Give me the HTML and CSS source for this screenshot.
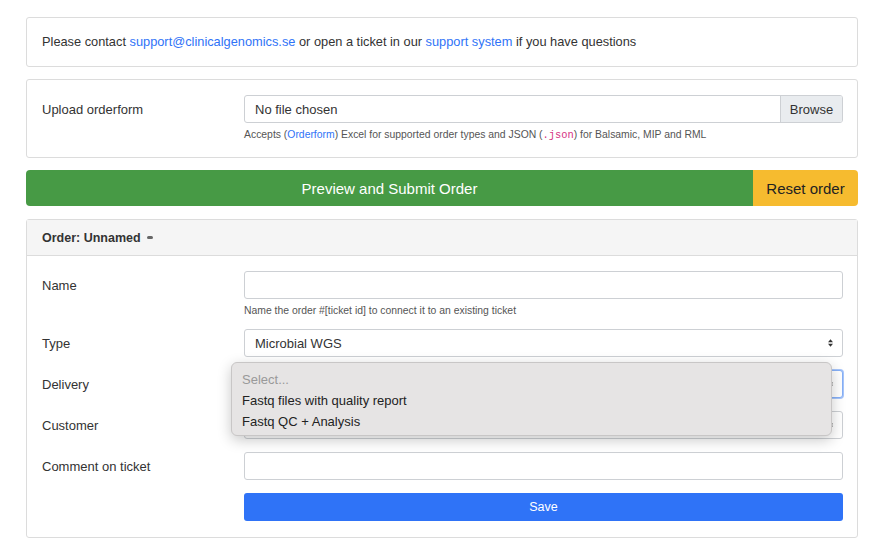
FILE: index.html
```html
<!DOCTYPE html>
<html>
<head>
<meta charset="utf-8">
<link rel="stylesheet" href="styles.css">
</head>
<body>
<div class="page">
  <div class="card card-info">
    <p class="info-text">Please contact <a href="#">support@clinicalgenomics.se</a> or open a ticket in our <a href="#">support system</a> if you have questions</p>
  </div>

  <div class="card card-upload">
    <div class="row">
      <div class="label">Upload orderform</div>
      <div class="field">
        <div class="file">
          <span class="file-name">No file chosen</span>
          <span class="file-btn">Browse</span>
        </div>
        <div class="help">Accepts (<a href="#">Orderform</a>) Excel for supported order types and JSON (<code>.json</code>) for Balsamic, MIP and RML</div>
      </div>
    </div>
  </div>

  <div class="actions">
    <button class="btn-submit">Preview and Submit Order</button>
    <button class="btn-reset">Reset order</button>
  </div>

  <div class="card card-order">
    <div class="card-head">Order: Unnamed <span class="edit-ico"></span></div>
    <div class="card-body">
      <div class="row row-help">
        <div class="label">Name</div>
        <div class="field">
          <div class="input"></div>
          <div class="help">Name the order #[ticket id] to connect it to an existing ticket</div>
        </div>
      </div>
      <div class="row">
        <div class="label">Type</div>
        <div class="field">
          <div class="input select">Microbial WGS<svg class="arrows" viewBox="0 0 8 12" width="7" height="10"><path d="M1 5 L4 1.5 L7 5 Z M1 7 L4 10.5 L7 7 Z" fill="#333"/></svg></div>
        </div>
      </div>
      <div class="row">
        <div class="label">Delivery</div>
        <div class="field field-pop">
          <div class="input select focused"><svg class="arrows" viewBox="0 0 8 12" width="7" height="10"><path d="M1 5 L4 1.5 L7 5 Z M1 7 L4 10.5 L7 7 Z" fill="#333"/></svg></div>
          <div class="dropdown">
            <div class="opt opt-ph">Select...</div>
            <div class="opt">Fastq files with quality report</div>
            <div class="opt">Fastq QC + Analysis</div>
          </div>
        </div>
      </div>
      <div class="row">
        <div class="label">Customer</div>
        <div class="field">
          <div class="input select"><svg class="arrows" viewBox="0 0 8 12" width="7" height="10"><path d="M1 5 L4 1.5 L7 5 Z M1 7 L4 10.5 L7 7 Z" fill="#333"/></svg></div>
        </div>
      </div>
      <div class="row">
        <div class="label">Comment on ticket</div>
        <div class="field">
          <div class="input"></div>
        </div>
      </div>
      <div class="row">
        <div class="label"></div>
        <div class="field">
          <button class="btn-save">Save</button>
        </div>
      </div>
    </div>
  </div>
</div>
</body>
</html>
```

FILE: styles.css
```css
* { box-sizing: border-box; }
html, body { margin: 0; padding: 0; background: #fff; }
body {
  font-family: "Liberation Sans", Arial, sans-serif;
  font-size: 13px;
  color: #333;
}
a { color: #2f73f7; text-decoration: none; }
.page {
  width: 832px;
  margin: 17px 0 0 26px;
  display: flex;
  flex-direction: column;
  gap: 12px;
}
.card {
  border: 1px solid #dcdcdc;
  border-radius: 3px;
  background: #fff;
}
.card-info {
  height: 50px;
  padding: 0 15px;
}
.info-text {
  margin: 0;
  line-height: 48px;
  font-size: 12.8px;
}
.card-upload {
  padding: 15px 15px 0 15px;
  height: 79px;
}
.row {
  display: grid;
  grid-template-columns: 202px 599px;
  align-items: start;
}
.label {
  height: 28px;
  display: flex;
  align-items: center;
}
.file {
  height: 28px;
  border: 1px solid #cdd0d4;
  border-radius: 3px;
  display: flex;
  align-items: stretch;
  overflow: hidden;
}
.file-name {
  flex: 1;
  display: flex;
  align-items: center;
  padding-left: 10px;
}
.file-btn {
  width: 62px;
  background: #e9ecef;
  border-left: 1px solid #cdd0d4;
  display: flex;
  align-items: center;
  justify-content: center;
}
.help {
  font-size: 10.4px;
  color: #555;
  margin-top: 5px;
  line-height: 14px;
}
.help code {
  font-family: "Liberation Mono", monospace;
  color: #d63384;
  font-size: 10.4px;
}
.actions {
  display: flex;
  height: 36px;
  margin-bottom: 1px;
}
.actions button {
  border: none;
  font-family: inherit;
  font-size: 15px;
  margin: 0;
}
.btn-submit {
  flex: 1;
  background: #479a45;
  color: #fff;
  border-radius: 4px 0 0 4px;
}
.btn-reset {
  width: 105px;
  background: #f6bb2f;
  color: #222;
  border-radius: 0 4px 4px 0;
}
.card-order { height: 319px; }
.card-head {
  height: 36px;
  background: #f5f5f5;
  border-bottom: 1px solid #dcdcdc;
  padding: 0 15px;
  display: flex;
  align-items: center;
  font-weight: bold;
  font-size: 12.5px;
  color: #333;
}
.edit-ico {
  display: inline-block;
  width: 6px;
  height: 3px;
  border-radius: 2px;
  background: #666;
  margin-left: 6px;
}
.card-body {
  padding: 15px 15px 0 15px;
  display: flex;
  flex-direction: column;
  gap: 13px;
}
.row-help { margin-bottom: -2px; }
.input {
  height: 28px;
  border: 1px solid #cdd0d4;
  border-radius: 3px;
  background: #fff;
  position: relative;
  display: flex;
  align-items: center;
  padding-left: 10px;
}
.select .arrows {
  position: absolute;
  right: 8px;
  top: 8px;
}
.focused {
  border-color: #86b0f7;
  box-shadow: 0 0 0 1px #a8c6fa;
}
.field-pop { position: relative; }
.dropdown {
  position: absolute;
  left: -13px;
  top: -8px;
  width: 601px;
  height: 74px;
  background: #e6e4e4;
  border: 1px solid #c8c6c6;
  border-radius: 6px;
  box-shadow: 0 4px 14px rgba(0,0,0,0.22);
  padding: 6px 0 0 10px;
  z-index: 5;
}
.opt {
  height: 21px;
  line-height: 21px;
  color: #222;
}
.opt-ph { color: #999; }
.btn-save {
  width: 599px;
  height: 28px;
  border: none;
  border-radius: 3px;
  background: #2f73f7;
  color: #fff;
  font-family: inherit;
  font-size: 12.5px;
  margin: 0;
}
```
